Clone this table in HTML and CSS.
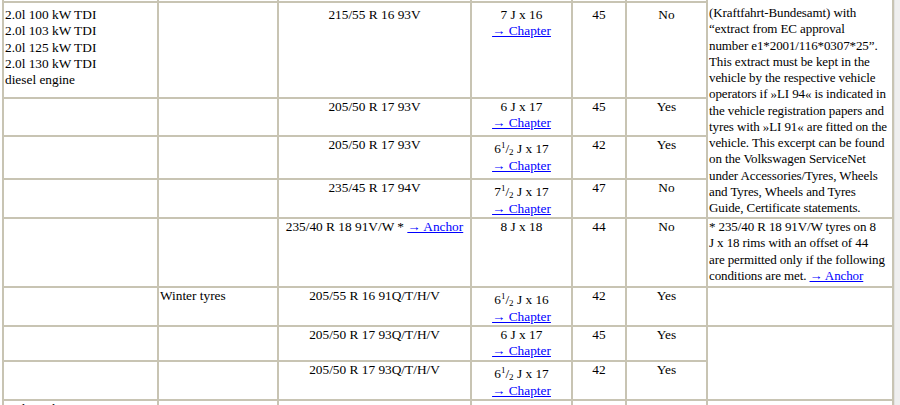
FILE: index.html
```html
<!DOCTYPE html>
<html lang="en">
<head>
<meta charset="utf-8">
<title>Wheels and tyres</title>
<link rel="stylesheet" href="styles.css">
</head>
<body>
<div class="page">
  <div class="viewport">
    <table class="tyres">
      <tr class="row-prev">
        <td class="c1">1.6l 77 kW TDI</td>
        <td class="c2"></td>
        <td class="c3 mid">205/55 R 16 91V</td>
        <td class="c4 mid">6 J x 16</td>
        <td class="c5 mid">50</td>
        <td class="c6 mid">Yes</td>
        <td class="c7 note" rowspan="6"><p class="note-lead">Only permitted for vehicles with<br>load index »LI 94« if there is a<br>certificate from the authority.</p><p class="note-body">(Kraftfahrt-Bundesamt) with<br>“extract from EC approval<br>number e1*2001/116*0307*25”.<br>This extract must be kept in the<br>vehicle by the respective vehicle<br>operators if »LI 94« is indicated in<br>the vehicle registration papers and<br>tyres with »LI 91« are fitted on the<br>vehicle. This excerpt can be found<br>on the Volkswagen ServiceNet<br>under Accessories/Tyres, Wheels<br>and Tyres, Wheels and Tyres<br>Guide, Certificate statements.</p></td>
      </tr>
      <tr class="row-top">
        <td>1.6l 81 kW TDI<br>4MOTION (Highline only)</td>
        <td></td>
        <td class="mid">215/55 R 16 93V</td>
        <td class="mid">7 J x 16<br><a href="#">→ Chapter</a></td>
        <td class="mid">45</td>
        <td class="mid">No</td>
      </tr>
      <tr class="row-engines">
        <td>2.0l 100 kW TDI<br>2.0l 103 kW TDI<br>2.0l 125 kW TDI<br>2.0l 130 kW TDI<br>diesel engine</td>
        <td></td>
        <td class="mid">215/55 R 16 93V</td>
        <td class="mid">7 J x 16<br><a href="#">→ Chapter</a></td>
        <td class="mid">45</td>
        <td class="mid">No</td>
      </tr>
      <tr class="row-b">
        <td></td>
        <td></td>
        <td class="mid">205/50 R 17 93V</td>
        <td class="mid">6 J x 17<br><a href="#">→ Chapter</a></td>
        <td class="mid">45</td>
        <td class="mid">Yes</td>
      </tr>
      <tr class="row-c">
        <td></td>
        <td></td>
        <td class="mid">205/50 R 17 93V</td>
        <td class="mid">6<sup>1</sup>/<sub>2</sub> J x 17<br><a href="#">→ Chapter</a></td>
        <td class="mid">42</td>
        <td class="mid">Yes</td>
      </tr>
      <tr class="row-d">
        <td></td>
        <td></td>
        <td class="mid">235/45 R 17 94V</td>
        <td class="mid">7<sup>1</sup>/<sub>2</sub> J x 17<br><a href="#">→ Chapter</a></td>
        <td class="mid">47</td>
        <td class="mid">No</td>
      </tr>
      <tr class="row-e">
        <td></td>
        <td></td>
        <td class="mid">235/40 R 18 91V/W * <a href="#">→ Anchor</a></td>
        <td class="mid">8 J x 18</td>
        <td class="mid">44</td>
        <td class="mid">No</td>
        <td class="note">* 235/40 R 18 91V/W tyres on 8<br>J x 18 rims with an offset of 44<br>are permitted only if the following<br>conditions are met. <a href="#">→ Anchor</a></td>
      </tr>
      <tr class="row-f">
        <td></td>
        <td>Winter tyres</td>
        <td class="mid">205/55 R 16 91Q/T/H/V</td>
        <td class="mid">6<sup>1</sup>/<sub>2</sub> J x 16<br><a href="#">→ Chapter</a></td>
        <td class="mid">42</td>
        <td class="mid">Yes</td>
        <td></td>
      </tr>
      <tr class="row-g">
        <td></td>
        <td></td>
        <td class="mid">205/50 R 17 93Q/T/H/V</td>
        <td class="mid">6 J x 17<br><a href="#">→ Chapter</a></td>
        <td class="mid">45</td>
        <td class="mid">Yes</td>
        <td rowspan="2"></td>
      </tr>
      <tr class="row-h">
        <td></td>
        <td></td>
        <td class="mid">205/50 R 17 93Q/T/H/V</td>
        <td class="mid">6<sup>1</sup>/<sub>2</sub> J x 17<br><a href="#">→ Chapter</a></td>
        <td class="mid">42</td>
        <td class="mid">Yes</td>
      </tr>
      <tr>
        <td>2.0l 155 kW TSI<br>petrol engine</td>
        <td>Summer tyres</td>
        <td class="mid">215/55 R 16 93W</td>
        <td class="mid">6<sup>1</sup>/<sub>2</sub> J x 16<br><a href="#">→ Chapter</a></td>
        <td class="mid">42</td>
        <td class="mid">No</td>
        <td></td>
      </tr>
    </table>
  </div>
  <div class="scrollbar"></div>
</div>
</body>
</html>
```

FILE: styles.css
```css
html, body {
  margin: 0;
  padding: 0;
  background: #ffffff;
}

body {
  font-family: "Liberation Serif", "Times New Roman", serif;
  font-size: 13.33px;
  line-height: 16.25px;
  color: #000000;
}

.page {
  display: flex;
  height: 405px;
  overflow: hidden;
}

.viewport {
  flex: 1;
  padding-left: 2px;
  overflow: hidden;
}

.scrollbar {
  width: 5px;
  background: #efefef;
  border-left: 1px solid #e2e2e2;
}

.tyres {
  border-collapse: separate;
  border-spacing: 0;
  border: 1px solid #c8c4b3;
  table-layout: fixed;
  width: 892px;
  margin-top: -62px;
}

.tyres td {
  border: 1px solid #c8c4b3;
  padding: 0 1px;
  vertical-align: top;
  text-align: left;
  box-sizing: border-box;
}

.tyres td.mid {
  text-align: center;
}

.tyres td.note {
  font-size: 13px;
  letter-spacing: -0.1px;
  white-space: nowrap;
}

.note-lead {
  margin: 0 0 16.25px;
}

.note-body {
  margin: 0;
}

.c1 { width: 155px; }
.c2 { width: 120px; }
.c3 { width: 193px; }
.c4 { width: 101px; }
.c5 { width: 54px; }
.c6 { width: 81px; }
.c7 { width: 186px; }

.row-prev { height: 27px; }
.row-top { height: 36px; }
.row-engines { height: 96px; }
.row-engines td { padding-top: 4px; }
.row-b { height: 38px; }
.row-c { height: 43px; }
.row-d { height: 39px; }
.row-e { height: 69px; }
.row-f { height: 39px; }
.row-g { height: 35px; }
.row-h { height: 37px; }

a {
  color: #0000ff;
  text-decoration: underline;
}

sup {
  font-size: 9px;
}

sub {
  font-size: 9px;
  vertical-align: -2px;
  line-height: 9px;
}
```
